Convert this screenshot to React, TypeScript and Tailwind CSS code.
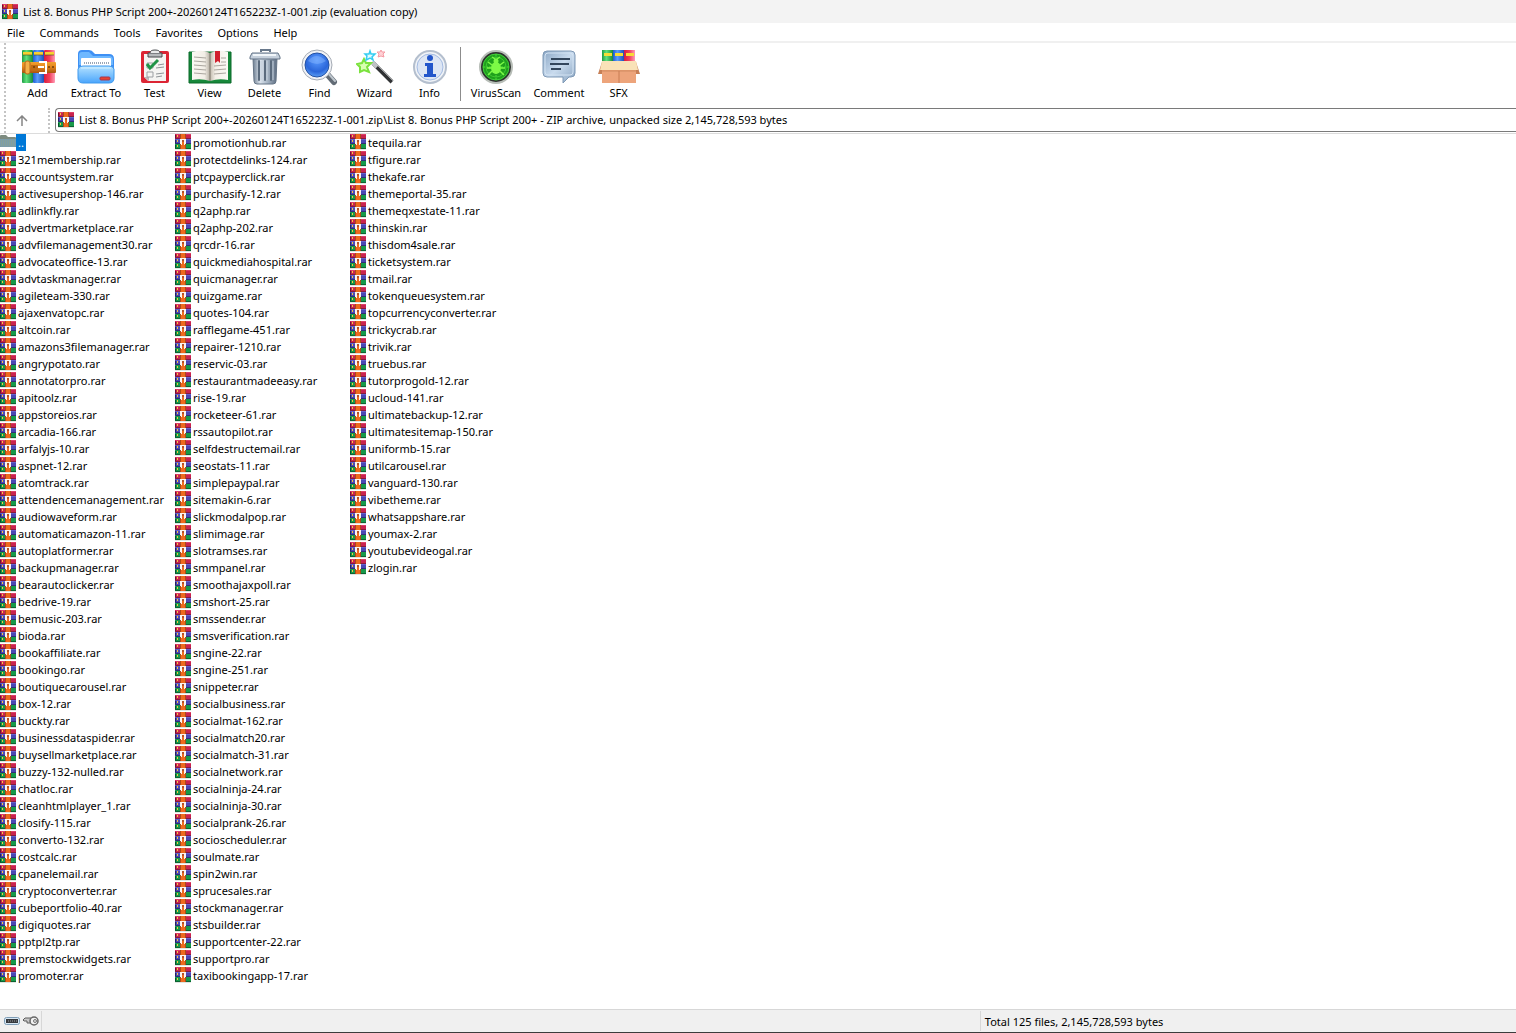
import React from 'react';

const RarIcon: React.FC = () => (
  <svg viewBox="0 0 16 16" className="w-4 h-4 shrink-0" shapeRendering="crispEdges" aria-hidden="true">
    <rect width="16" height="5" fill="#c9234f" />
    <rect x="1" width="15" height="1" fill="#dd3f68" />
    <rect y="4" width="16" height="1" fill="#861a3c" />
    <rect y="5" width="16" height="5" fill="#4a48b4" />
    <rect x="1" y="5" width="15" height="1" fill="#6562cf" />
    <rect y="9" width="16" height="1" fill="#302d78" />
    <rect y="10" width="16" height="5" fill="#17994a" />
    <rect y="14" width="16" height="1" fill="#0c6431" />
    <rect y="15" width="16" height="1" fill="#dfe5e1" />
    <path d="M0 1h1v3H0z" fill="#6a1430" />
    <path d="M0 6h1v3H0z" fill="#25235f" />
    <path d="M0 11h1v3H0z" fill="#07512a" />
    <path d="M2 1h1v2H2zM2 6h1v2H2zM2 11h1v2H2z" fill="#f5c842" />
    <rect x="5" width="6" height="15" fill="#a84a1c" />
    <rect x="6" width="4" height="15" fill="#ee6a1e" />
    <path d="M5 5h6v5H5z" fill="#faf5f2" />
    <path d="M7 6h2v2H7z" fill="#b4502a" />
    <path d="M6 9h1v2H6zM9 9h1v2H9z" fill="#faf5f2" />
    <path d="M7 8h2v3H7z" fill="#ee6a1e" />
  </svg>
);

const FolderIcon: React.FC = () => (
  <svg viewBox="0 0 16 16" className="w-4 h-4 shrink-0" aria-hidden="true">
    <path d="M0 2q0-1 1-1h5l2 2h7q1 0 1 1v9H0z" fill="#7d8b80" />
    <path d="M0 5h16v7q0 1-1 1H1q-1 0-1-1z" fill="#7c9daa" />
    <path d="M1 7h14M1 9h14M1 11h14" stroke="#8fa58a" strokeDasharray="1 1" />
  </svg>
);

const AddIcon: React.FC = () => (
  <svg viewBox="0 0 36 36" className="w-9 h-9" aria-hidden="true">
    <defs>
      <linearGradient id="bookGreen">
        <stop offset="0" stopColor="#1f9c45" /><stop offset=".4" stopColor="#5fe07c" /><stop offset="1" stopColor="#188a3a" />
      </linearGradient>
      <linearGradient id="bookBlue">
        <stop offset="0" stopColor="#1f5bd0" /><stop offset=".4" stopColor="#5a9dfa" /><stop offset="1" stopColor="#1d50b8" />
      </linearGradient>
      <linearGradient id="bookRed">
        <stop offset="0" stopColor="#d81c3c" /><stop offset=".5" stopColor="#f2405c" /><stop offset="1" stopColor="#ff9db8" />
      </linearGradient>
      <linearGradient id="strap" x1="0" y1="0" x2="0" y2="1">
        <stop offset="0" stopColor="#f0a030" /><stop offset=".4" stopColor="#e8891e" /><stop offset="1" stopColor="#a8540f" />
      </linearGradient>
    </defs>
    <rect x="2" y="1" width="11" height="33" rx="1" fill="url(#bookGreen)" />
    <rect x="13" y="1" width="11" height="33" rx="1" fill="url(#bookBlue)" />
    <rect x="24" y="1" width="11" height="33" rx="1" fill="url(#bookRed)" />
    <path d="M3 3h9v3H3zM14 3h9v3h-9zM25 3h9v3h-9z" fill="#f6d030" />
    <path d="M3 6h9M14 6h9M25 6h9" stroke="#4c4420" opacity=".6" />
    <rect x="2" y="13" width="34" height="11" rx="1" fill="url(#strap)" />
    <rect x="5" y="12" width="5" height="13" rx="2" fill="#f4b04a" stroke="#b5681a" />
    <path d="M11 16h7v6h-7" fill="#c26c14" />
    <path d="M19 13h7v11h-7" fill="none" stroke="#fff" strokeWidth="2" />
    <path d="M18 18h6" stroke="#fff" strokeWidth="2" />
    <circle cx="14" cy="18" r="1" fill="#6f3b0a" />
    <circle cx="29" cy="18" r="1" fill="#6f3b0a" />
    <circle cx="33" cy="18" r="1" fill="#6f3b0a" />
  </svg>
);

const ExtractIcon: React.FC = () => (
  <svg viewBox="0 0 38 36" className="w-[38px] h-9" aria-hidden="true">
    <defs>
      <linearGradient id="folderFront" x1="0" y1="0" x2="0" y2="1">
        <stop offset="0" stopColor="#b4e2ff" /><stop offset="1" stopColor="#4aa5fc" />
      </linearGradient>
    </defs>
    <path d="M1 5q0-4 4-4h7q3 0 5 3l1 1h14q5 0 5 5v17H1z" fill="#3e90f4" />
    <path d="M2 6q0-3 3-3h7l4 4h16q4 0 4 4v5H2z" fill="#6db8ff" />
    <rect x="4" y="9" width="30" height="12" rx="1" fill="#fff" />
    <path d="M7 14h26" stroke="#9aa6b5" strokeWidth="2" strokeDasharray="1 1" />
    <path d="M1 20q1-3 5-3h26q4 0 5 3v9q0 5-5 5H6q-5 0-5-5z" fill="url(#folderFront)" stroke="#3f99ee" />
    <path d="M4 19h30" stroke="#d5f1ff" />
    <rect x="23" y="28" width="10" height="3" rx="1" fill="#e9432f" stroke="#a33950" />
  </svg>
);

const TestIcon: React.FC = () => (
  <svg viewBox="0 0 30 36" className="w-[30px] h-9" aria-hidden="true">
    <rect x="1" y="2" width="28" height="32" rx="2" fill="#dc2534" />
    <path d="M4 5h22v27H8l-4-4z" fill="#f4f4f2" />
    <path d="M4 28l5 0v4z" fill="#b7b7b9" />
    <path d="M8 4h14v4H8z" fill="#b6b9bc" stroke="#46494c" />
    <path d="M10 4q0-3 5-3t5 3" fill="#e9eaeb" stroke="#4a4d50" />
    <path d="M7 14h6v5H7zM7 23h6v5H7z" fill="none" stroke="#9b9fa2" />
    <path d="M7 15l3 4 8-8" fill="none" stroke="#209447" strokeWidth="3" />
    <path d="M18 16l6-1M16 19l8-1M16 25l8-1M16 28l6-1" stroke="#8e9396" />
  </svg>
);

const ViewIcon: React.FC = () => (
  <svg viewBox="0 0 44 36" className="w-11 h-9" aria-hidden="true">
    <defs>
      <linearGradient id="pageLeft">
        <stop offset="0" stopColor="#fbf9f4" /><stop offset=".7" stopColor="#f2eee6" /><stop offset="1" stopColor="#b6afa3" />
      </linearGradient>
      <linearGradient id="pageRight">
        <stop offset="0" stopColor="#c2bbae" /><stop offset=".3" stopColor="#f4f0e8" /><stop offset="1" stopColor="#fbf9f4" />
      </linearGradient>
    </defs>
    <path d="M1 3h42v31H1z" fill="#17883b" stroke="#0a6a2a" />
    <path d="M4 3q10-3 18 1v28q-9-3-18-1z" fill="url(#pageLeft)" />
    <path d="M22 4q9-4 18-1v28q-9-2-18 1z" fill="url(#pageRight)" />
    <path d="M22 4v28" stroke="#7b7568" />
    <path d="M6 8l12 1M6 12l12 1M6 16l12 1M6 20l12 1M6 24l12 1M26 17l12-1M26 21l12-1M26 25l12-1M33 9h5M33 13h5" stroke="#aaa69e" />
    <path d="M27 2h5v12l-2-2-3 2z" fill="#d1202d" />
  </svg>
);

const DeleteIcon: React.FC = () => (
  <svg viewBox="0 0 32 38" className="w-8 h-[38px]" aria-hidden="true">
    <defs>
      <linearGradient id="bin">
        <stop offset="0" stopColor="#6e7f92" /><stop offset=".3" stopColor="#dbe3ec" />
        <stop offset=".6" stopColor="#a8b6c5" /><stop offset="1" stopColor="#5c6c80" />
      </linearGradient>
    </defs>
    <path d="M12 4V2h9v2" fill="none" stroke="#68788b" strokeWidth="2" />
    <path d="M4 10h24l-1 23q0 3-3 3H8q-3 0-3-3z" fill="url(#bin)" stroke="#657486" />
    <path d="M10 13v19M16 13v19M22 13v19" stroke="#5b6b7d" strokeWidth="2" strokeLinecap="round" />
    <path d="M12 13v19M18 13v19M24 13v19" stroke="#c4d0dc" />
    <path d="M3 5h26l2 4v2H1V9z" fill="#c5d0dc" stroke="#627386" />
    <path d="M4 7h23" stroke="#f1f6fa" strokeWidth="2" />
  </svg>
);

const FindIcon: React.FC = () => (
  <svg viewBox="0 0 38 38" className="w-[38px] h-[38px]" aria-hidden="true">
    <defs>
      <radialGradient id="lens" cx=".5" cy=".3" r=".8">
        <stop offset="0" stopColor="#5b9cff" /><stop offset=".6" stopColor="#2a66da" /><stop offset="1" stopColor="#6fb5ff" />
      </radialGradient>
    </defs>
    <path d="M26 26l7 8" stroke="#626b75" strokeWidth="6" strokeLinecap="round" />
    <path d="M27 25l7 8" stroke="#bdc5cc" strokeWidth="2" strokeLinecap="round" />
    <circle cx="16" cy="17" r="15" fill="#f0f2f6" stroke="#a5abb4" />
    <circle cx="16" cy="17" r="12" fill="url(#lens)" stroke="#2452a4" />
    <path d="M7 13q8-10 18 0-9 6-18 0z" fill="#8ab7ff" opacity=".45" />
  </svg>
);

const WizardIcon: React.FC = () => (
  <svg viewBox="0 0 38 36" className="w-[38px] h-9" aria-hidden="true">
    <path d="M17 14l19 19" stroke="#303234" strokeWidth="4" />
    <path d="M18 13l19 19" stroke="#989b9e" />
    <path d="M16 13l5 5" stroke="#bfc2c4" strokeWidth="4" />
    <path d="M8 10l2 4 5 0-4 4 2 5-5-2-4 2 0-5-3-3 5-1z" fill="#d8ffb0" stroke="#7be23e" strokeWidth="2" />
    <path d="M14 2l1 3 4 0-3 3 1 3-3-2-4 2 1-4-2-2 4 0z" fill="#e2fbff" stroke="#35cdf2" strokeWidth="1.5" />
    <path d="M25 1l1 2 3 0-2 2 1 3-3-1-3 1 1-3-2-2 3 0z" fill="#ffd2d6" stroke="#f59aa3" />
  </svg>
);

const InfoIcon: React.FC = () => (
  <svg viewBox="0 0 36 36" className="w-9 h-9" aria-hidden="true">
    <circle cx="18" cy="18" r="16" fill="#f0f3f7" stroke="#b4bfce" strokeWidth="2" />
    <circle cx="18" cy="18" r="13" fill="#dde6f4" stroke="#a3bbe2" />
    <circle cx="18" cy="9" r="3" fill="#2356ca" />
    <path d="M13 14h8v11h3v3H12v-3h3v-8h-2z" fill="#2356ca" />
  </svg>
);

const VirusIcon: React.FC = () => (
  <svg viewBox="0 0 36 36" className="w-9 h-9" aria-hidden="true">
    <circle cx="18" cy="18" r="16" fill="#2e332e" stroke="#b7bdb7" strokeWidth="2" />
    <circle cx="18" cy="18" r="13" fill="#1fa01c" stroke="#3fd03a" />
    <path d="M18 5v26M5 18h26" stroke="#4dde36" strokeDasharray="2 1" />
    <circle cx="18" cy="18" r="10" fill="none" stroke="#3fc832" />
    <ellipse cx="18" cy="19" rx="5" ry="6" fill="#7dfa46" />
    <circle cx="18" cy="12" r="2.5" fill="#7dfa46" />
    <path d="M14 16l-4-3M13 19H9M14 22l-4 4M22 16l4-3M23 19h4M22 22l4 4M17 10l-3-2M19 10l3-2" stroke="#7dfa46" strokeWidth="1.5" />
  </svg>
);

const CommentIcon: React.FC = () => (
  <svg viewBox="0 0 36 36" className="w-9 h-9" aria-hidden="true">
    <defs>
      <linearGradient id="bubble" x1="0" y1="0" x2="1" y2="1">
        <stop offset="0" stopColor="#8aa6c4" /><stop offset=".5" stopColor="#c9dbee" /><stop offset="1" stopColor="#86a1be" />
      </linearGradient>
    </defs>
    <path d="M6 2h24q4 0 4 4v18q0 4-4 4h-2l-6 6v-6H6q-4 0-4-4V6q0-4 4-4z" fill="url(#bubble)" stroke="#7f99b6" />
    <rect x="4" y="4" width="28" height="22" rx="3" fill="none" stroke="#d3e3f3" />
    <path d="M10 10h19M9 15h19M10 20h10" stroke="#33465c" strokeWidth="2" />
  </svg>
);

const SfxIcon: React.FC = () => (
  <svg viewBox="0 0 44 36" className="w-11 h-9" aria-hidden="true">
    <rect x="5" y="1" width="11" height="15" fill="url(#bookGreen)" />
    <rect x="16" y="1" width="11" height="15" fill="url(#bookBlue)" />
    <rect x="27" y="1" width="11" height="15" fill="url(#bookRed)" />
    <path d="M7 4h8v3H7zM18 4h8v3h-8zM29 4h8v3h-8z" fill="#f6dc36" />
    <path d="M5 12h34v22H5z" fill="#e79c70" />
    <path d="M5 13L1 25h4zM39 13l4 12h-4z" fill="#c67f56" />
    <path d="M5 12h34l2 9H3z" fill="#f9e2b8" />
    <path d="M5 22h34v12H5z" fill="#eda47b" />
    <path d="M5 22h34" stroke="#d28c62" />
    <path d="M22 22v12" stroke="#c87c54" />
  </svg>
);

const menus = ['File', 'Commands', 'Tools', 'Favorites', 'Options', 'Help'];

const mainTools = [
  { label: 'Add', icon: <AddIcon />, width: 'w-[55px]' },
  { label: 'Extract To', icon: <ExtractIcon />, width: 'w-[62px]' },
  { label: 'Test', icon: <TestIcon />, width: 'w-[55px]' },
  { label: 'View', icon: <ViewIcon />, width: 'w-[55px]' },
  { label: 'Delete', icon: <DeleteIcon />, width: 'w-[55px]' },
  { label: 'Find', icon: <FindIcon />, width: 'w-[55px]' },
  { label: 'Wizard', icon: <WizardIcon />, width: 'w-[55px]' },
  { label: 'Info', icon: <InfoIcon />, width: 'w-[55px]' },
];

const extraTools = [
  { label: 'VirusScan', icon: <VirusIcon />, width: 'w-[62px]' },
  { label: 'Comment', icon: <CommentIcon />, width: 'w-16' },
  { label: 'SFX', icon: <SfxIcon />, width: 'w-[55px]' },
];

const files = [
  '321membership', 'accountsystem', 'activesupershop-146', 'adlinkfly', 'advertmarketplace',
  'advfilemanagement30', 'advocateoffice-13', 'advtaskmanager', 'agileteam-330', 'ajaxenvatopc',
  'altcoin', 'amazons3filemanager', 'angrypotato', 'annotatorpro', 'apitoolz', 'appstoreios',
  'arcadia-166', 'arfalyjs-10', 'aspnet-12', 'atomtrack', 'attendencemanagement', 'audiowaveform',
  'automaticamazon-11', 'autoplatformer', 'backupmanager', 'bearautoclicker', 'bedrive-19',
  'bemusic-203', 'bioda', 'bookaffiliate', 'bookingo', 'boutiquecarousel', 'box-12', 'buckty',
  'businessdataspider', 'buysellmarketplace', 'buzzy-132-nulled', 'chatloc', 'cleanhtmlplayer_1',
  'closify-115', 'converto-132', 'costcalc', 'cpanelemail', 'cryptoconverter', 'cubeportfolio-40',
  'digiquotes', 'pptpl2tp', 'premstockwidgets', 'promoter',
  'promotionhub', 'protectdelinks-124', 'ptcpayperclick', 'purchasify-12', 'q2aphp', 'q2aphp-202',
  'qrcdr-16', 'quickmediahospital', 'quicmanager', 'quizgame', 'quotes-104', 'rafflegame-451',
  'repairer-1210', 'reservic-03', 'restaurantmadeeasy', 'rise-19', 'rocketeer-61', 'rssautopilot',
  'selfdestructemail', 'seostats-11', 'simplepaypal', 'sitemakin-6', 'slickmodalpop', 'slimimage',
  'slotramses', 'smmpanel', 'smoothajaxpoll', 'smshort-25', 'smssender', 'smsverification',
  'sngine-22', 'sngine-251', 'snippeter', 'socialbusiness', 'socialmat-162', 'socialmatch20',
  'socialmatch-31', 'socialnetwork', 'socialninja-24', 'socialninja-30', 'socialprank-26',
  'socioscheduler', 'soulmate', 'spin2win', 'sprucesales', 'stockmanager', 'stsbuilder',
  'supportcenter-22', 'supportpro', 'taxibookingapp-17',
  'tequila', 'tfigure', 'thekafe', 'themeportal-35', 'themeqxestate-11', 'thinskin', 'thisdom4sale',
  'ticketsystem', 'tmail', 'tokenqueuesystem', 'topcurrencyconverter', 'trickycrab', 'trivik',
  'truebus', 'tutorprogold-12', 'ucloud-141', 'ultimatebackup-12', 'ultimatesitemap-150',
  'uniformb-15', 'utilcarousel', 'vanguard-130', 'vibetheme', 'whatsappshare', 'youmax-2',
  'youtubevideogal', 'zlogin',
];

interface ToolProps {
  label: string;
  icon: React.ReactNode;
  width: string;
}

const ToolButton: React.FC<ToolProps> = ({ label, icon, width }) => (
  <button type="button" className={`${width} pt-0.5 flex flex-col items-center whitespace-nowrap`}>
    <span className="h-9 flex items-center">{icon}</span>
    <span className="leading-4">{label}</span>
  </button>
);

const App: React.FC = () => (
  <div className="min-h-screen flex flex-col bg-white text-black text-[11px] leading-4 font-['Noto_Sans','Open_Sans',sans-serif]">
    <header className="h-[23px] px-0.5 flex items-center gap-[5px] bg-[#f3f3f3]">
      <RarIcon />
      <h1>List 8. Bonus PHP Script 200+-20260124T165223Z-1-001.zip (evaluation copy)</h1>
    </header>

    <nav className="h-[18px] flex items-end gap-px">
      {menus.map((menu) => (
        <button key={menu} type="button" className="px-[7px]">{menu}</button>
      ))}
    </nav>

    <div className="flex border-t-2 border-[#f0f0f0] border-b border-b-[#dcdcdc]">
      <div className="w-1.5 shrink-0 border-r-2 border-dotted border-[#c4c4c4]" />
      <div className="flex-1 min-w-0">
        <div className="h-[65px] pt-1 pl-1 flex items-start">
          {mainTools.map((tool) => (
            <ToolButton key={tool.label} {...tool} />
          ))}
          <div className="w-px h-[54px] ml-[3px] mr-1 bg-[#8c8c8c]" />
          {extraTools.map((tool) => (
            <ToolButton key={tool.label} {...tool} />
          ))}
        </div>

        <div className="h-[25px] flex">
          <button type="button" aria-label="Up one level" className="w-8 flex items-center justify-center">
            <svg viewBox="0 0 12 12" className="w-3 h-3" fill="none" stroke="#858585" strokeWidth="1.5">
              <path d="M6 11V1M1 6l5-5 5 5" />
            </svg>
          </button>
          <div className="w-3 border-r-2 border-dotted border-[#c4c4c4]" />
          <label className="ml-[5px] h-6 flex-1 flex items-center gap-[5px] pl-0.5 border border-r-0 border-[#7a7a7a] rounded-l-sm">
            <RarIcon />
            <input
              type="text"
              readOnly
              aria-label="Archive path"
              className="flex-1 outline-none"
              value="List 8. Bonus PHP Script 200+-20260124T165223Z-1-001.zip\List 8. Bonus PHP Script 200+ - ZIP archive, unpacked size 2,145,728,593 bytes"
            />
          </label>
        </div>
      </div>
    </div>

    <main className="flex-1">
      <ul className="grid grid-flow-col grid-rows-[repeat(50,17px)] auto-cols-[175px] leading-[17px]">
        <li className="flex items-start">
          <FolderIcon />
          <span className="px-0.5 bg-[#0078d7] text-white">..</span>
        </li>
        {files.map((file) => (
          <li key={file} className="flex items-start gap-0.5 whitespace-nowrap">
            <RarIcon />
            <span>{file}.rar</span>
          </li>
        ))}
      </ul>
    </main>

    <footer className="h-6 flex items-center bg-[#f0f0f0] border-t border-t-[#d7d7d7] border-b border-b-[#3c3c3c]">
      <div className="w-[42px] h-5 pl-1 flex items-center gap-[3px] border-r border-[#d7d7d7]">
        <svg viewBox="0 0 16 10" className="w-4 h-2.5" aria-hidden="true">
          <rect x="0.500" y="1.500" width="15" height="7" rx="2" fill="#d8e8f4" stroke="#7d9cb6" />
          <rect x="2" y="3" width="12" height="4" fill="#36393d" />
          <path d="M4 5h9" stroke="#a0a3a6" strokeDasharray="1 1" />
        </svg>
        <svg viewBox="0 0 16 12" className="w-4 h-3" aria-hidden="true">
          <path d="M8 3H2L0 5l1 1h3v2h5" fill="#c8c8c8" stroke="#5c5c5c" />
          <circle cx="11" cy="6" r="4" fill="#f2f2f2" stroke="#666" strokeWidth="1.500" />
          <circle cx="12" cy="6" r="1.500" fill="#ddd" stroke="#777" />
        </svg>
      </div>
      <div className="flex-[941] h-5 border-r border-[#d7d7d7]" />
      <div className="flex-[533] pl-1 pt-0.5">Total 125 files, 2,145,728,593 bytes</div>
    </footer>
  </div>
);

export default App;
